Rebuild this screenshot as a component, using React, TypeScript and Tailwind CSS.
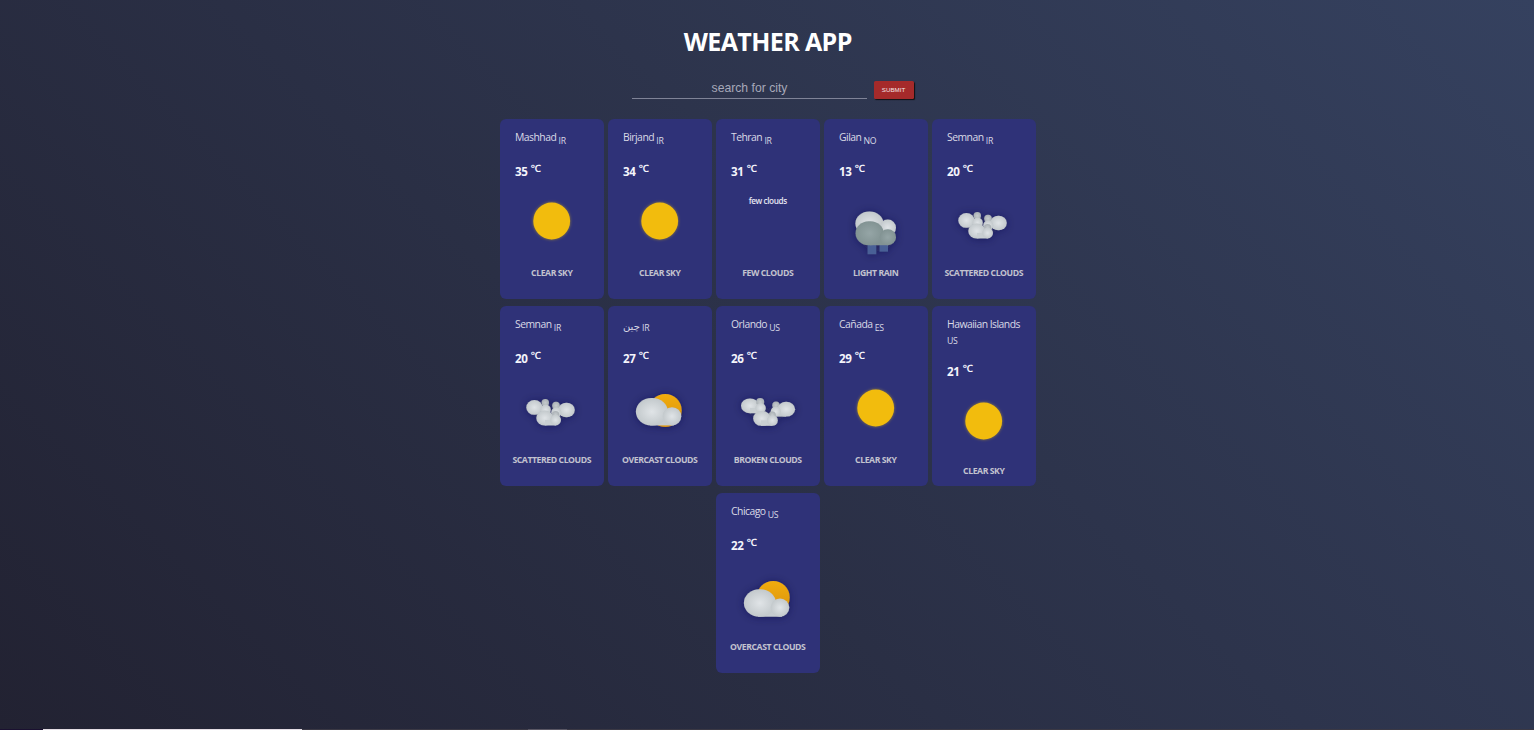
import React from 'react';

type Sky = 'clear' | 'missing' | 'rain' | 'scattered' | 'overcast' | 'broken';

interface City {
  name: string;
  country: string;
  temp: number;
  sky: Sky;
  label: string;
  rtl?: boolean;
  wrap?: boolean;
  drift?: number;
}

const cities: City[] = [
  { name: 'Mashhad', country: 'IR', temp: 35, sky: 'clear', label: 'CLEAR SKY' },
  { name: 'Birjand', country: 'IR', temp: 34, sky: 'clear', label: 'CLEAR SKY' },
  { name: 'Tehran', country: 'IR', temp: 31, sky: 'missing', label: 'FEW CLOUDS' },
  { name: 'Gilan', country: 'NO', temp: 13, sky: 'rain', label: 'LIGHT RAIN' },
  { name: 'Semnan', country: 'IR', temp: 20, sky: 'scattered', label: 'SCATTERED CLOUDS' },
  { name: 'Semnan', country: 'IR', temp: 20, sky: 'scattered', label: 'SCATTERED CLOUDS' },
  { name: 'چین', country: 'IR', temp: 27, sky: 'overcast', label: 'OVERCAST CLOUDS', rtl: true },
  { name: 'Orlando', country: 'US', temp: 26, sky: 'broken', label: 'BROKEN CLOUDS' },
  { name: 'Cañada', country: 'ES', temp: 29, sky: 'clear', label: 'CLEAR SKY' },
  { name: 'Hawaiian Islands', country: 'US', temp: 21, sky: 'clear', label: 'CLEAR SKY', wrap: true },
  { name: 'Chicago', country: 'US', temp: 22, sky: 'overcast', label: 'OVERCAST CLOUDS', drift: 4.3 },
];

/* Gradients and shadows shared by every weather drawing. */
function Defs() {
  return (
    <svg width="0" height="0" className="absolute" aria-hidden="true">
      <defs>
        <radialGradient id="puff">
          <stop offset="0" stopColor="#e0e4e7" />
          <stop offset="1" stopColor="#c3c9cc" />
        </radialGradient>
        <radialGradient id="dim">
          <stop offset="0" stopColor="#c6cbce" />
          <stop offset="1" stopColor="#a9b0b4" />
        </radialGradient>
        <radialGradient id="storm">
          <stop offset="0" stopColor="#95a5a6" />
          <stop offset="1" stopColor="#829393" />
        </radialGradient>
        <linearGradient id="amber" x1="0" y1="0" x2="0" y2="1">
          <stop offset="0" stopColor="#f1ac10" />
          <stop offset="1" stopColor="#d9920f" />
        </linearGradient>
        <filter id="shade" x="-40%" y="-40%" width="180%" height="180%">
          <feDropShadow dx="0" dy="0.5" stdDeviation="4.5" floodColor="#14163f" floodOpacity="0.5" />
        </filter>
        <filter id="glow" x="-30%" y="-30%" width="160%" height="160%">
          <feDropShadow dx="0" dy="0" stdDeviation="1.6" floodColor="#f1c40f" floodOpacity="0.55" />
        </filter>
      </defs>
    </svg>
  );
}

/* Each drawing covers an 80 by 70 area whose centre is the centre of the card. */
function Picture({ sky, drift = 0 }: { sky: Sky; drift?: number }) {
  return (
    <svg viewBox="0 0 80 70" className="h-[70px] w-[80px] overflow-visible">
      {sky === 'clear' && <circle cx="39.7" cy="35" r="18.4" fill="#f2bc11" filter="url(#glow)" />}
      {sky === 'rain' && (
        <g filter="url(#shade)">
          <ellipse cx="33.4" cy="37.5" rx="14" ry="11.9" fill="url(#puff)" />
          <circle cx="51.8" cy="41.7" r="8.2" fill="url(#puff)" />
          <rect x="31.6" y="56" width="8.6" height="12.2" fill="#4a6096" />
          <rect x="43.6" y="56" width="8.4" height="9.6" fill="#4a6096" />
          <path d="M34 50H52V59.2H34Z" fill="#829393" />
          <rect x="19.6" y="35.2" width="28" height="24" rx="13" ry="12" fill="url(#storm)" />
          <rect x="43.6" y="43.2" width="16.4" height="16" rx="8" fill="url(#storm)" />
        </g>
      )}
      {sky === 'scattered' && (
        <g filter="url(#shade)">
          <ellipse cx="22.4" cy="34.4" rx="8.1" ry="7.4" fill="url(#puff)" />
          <circle cx="33.3" cy="29.8" r="3.7" fill="url(#dim)" />
          <circle cx="44" cy="32.6" r="3.8" fill="url(#dim)" />
          <circle cx="33.6" cy="36.8" r="5.2" fill="url(#puff)" />
          <ellipse cx="54.5" cy="37" rx="8.3" ry="7.3" fill="url(#puff)" />
          <circle cx="44.3" cy="39.3" r="5" fill="url(#puff)" />
          <circle cx="43.6" cy="41.5" r="3.6" fill="url(#dim)" />
          <rect x="24.3" y="37.6" width="17" height="14.8" rx="8.2" ry="7.4" fill="url(#puff)" />
          <path d="M33 47H44V52.4H33Z" fill="#c9cfd2" />
          <circle cx="43.6" cy="47" r="5.4" fill="url(#puff)" />
        </g>
      )}
      {sky === 'broken' && (
        <g filter="url(#shade)">
          <ellipse cx="22" cy="32.8" rx="9" ry="7.4" fill="url(#puff)" />
          <circle cx="32.2" cy="29" r="4" fill="url(#dim)" />
          <path d="M22 35H33V40.2H22Z" fill="#c9cfd2" />
          <circle cx="32.6" cy="35.1" r="5.2" fill="url(#puff)" />
          <circle cx="48" cy="32.2" r="3.7" fill="url(#dim)" />
          <path d="M48 38H58V43.6H48Z" fill="#c3c9cc" />
          <ellipse cx="58.2" cy="36.2" rx="8.9" ry="7.4" fill="url(#puff)" />
          <circle cx="47.8" cy="38.5" r="5.1" fill="url(#puff)" />
          <circle cx="44.3" cy="42" r="3.5" fill="url(#dim)" />
          <rect x="25.2" y="38" width="17.4" height="14.8" rx="8.2" ry="7.4" fill="url(#puff)" />
          <path d="M33 47.4H44.4V52.8H33Z" fill="#c9cfd2" />
          <circle cx="44.4" cy="47.4" r="5.4" fill="url(#puff)" />
        </g>
      )}
      {sky === 'overcast' && (
        <g filter="url(#shade)">
          <circle cx="45.2" cy="37.4" r="16.5" fill="url(#amber)" />
          <g transform={`translate(0 ${drift})`}>
            <path d="M30 45H54V52.4H30Z" fill="#c6ccd0" />
            <rect x="15.9" y="25" width="32" height="27.4" rx="15.6" ry="13.7" fill="url(#puff)" />
            <rect x="42.7" y="34.2" width="18.6" height="18.2" rx="9.2" ry="9.1" fill="url(#puff)" />
          </g>
        </g>
      )}
    </svg>
  );
}

function Card({ city }: { city: City }) {
  return (
    <article className="flex h-[180px] w-[103.5px] flex-col overflow-hidden rounded-[6px] bg-[#2f3278]">
      <h2
        className={`flex h-[36px] shrink-0 items-baseline pt-[10px] pl-[15px] text-[10.4px] leading-[17px] tracking-[-0.52px] whitespace-nowrap text-[#dadae6] ${city.wrap ? 'mb-[13px] flex-col gap-0' : 'gap-[2.2px]'}`}
      >
        <span className={city.rtl ? "relative top-[2px] font-['DejaVu_Sans',sans-serif] text-[10px] tracking-normal" : ''}>{city.name}</span>
        <span className={`text-[8.7px] tracking-[-0.3px] ${city.wrap ? 'leading-[16px]' : 'relative top-[3px] leading-[14px]'}`}>{city.country}</span>
      </h2>
      <div className="flex h-[48px] shrink-0 items-baseline gap-[3px] pt-[8px] pl-[15px] leading-[17px] font-bold text-[#f4f4fb]">
        <span className="text-[11.6px] tracking-[-0.3px]">{city.temp}</span>
        <span className="relative top-[-4px] text-[10.4px] leading-[12px] font-semibold">℃</span>
      </div>
      {city.sky === 'missing' ? (
        <p className="-mt-[8px] h-[71px] shrink-0 text-center text-[8.2px] leading-[12px] font-semibold tracking-[-0.4px] text-[#e6e6f2]">few clouds</p>
      ) : (
        <div className="-mt-[17px] flex h-[80px] shrink-0 justify-center">
          <Picture sky={city.sky} drift={city.drift} />
        </div>
      )}
      <p
        className={`text-center text-[8.7px] leading-[14px] font-bold tracking-[-0.44px] whitespace-nowrap text-[#c3c3cf] ${city.wrap ? '-mt-[2px]' : ''}`}
      >
        {city.label}
      </p>
    </article>
  );
}

export default function App() {
  return (
    <div className="relative flex h-[730px] w-[1534px] flex-col items-center overflow-hidden bg-[linear-gradient(45deg,#222232,#35415f)] pl-[1.5px] font-['Open_Sans','Noto_Sans',sans-serif]">
      <Defs />
      <h1 className="mt-[23px] h-[36px] text-[25px] leading-[36px] font-bold tracking-[-0.6px] text-white">WEATHER APP</h1>
      <form className="mt-[18px] ml-[9.5px] flex h-[42px] w-[282px] gap-[7px]" onSubmit={(e) => e.preventDefault()}>
        <input
          className="h-[22px] w-[235px] border-b border-[#7f8397] bg-transparent pl-px text-center font-['Liberation_Sans',sans-serif] text-[12.2px] text-white outline-none placeholder:text-[#a7a9b9]"
          placeholder="search for city"
        />
        <button className="mt-[4px] h-[18px] w-[40px] rounded-[1.5px] bg-[#a52a2a] font-['Liberation_Sans',sans-serif] text-[6.2px] font-medium text-[#f4e4e6] shadow-[1px_1px_1px_#111]">
          SUBMIT
        </button>
      </form>
      <main className="flex w-[535.5px] flex-wrap justify-center gap-x-[4.5px] gap-y-[7px]">
        {cities.map((city, i) => (
          <Card key={i} city={city} />
        ))}
      </main>
      <div className="mt-auto -ml-[1.5px] flex h-px w-[1534px] shrink-0 bg-[#3a3844]">
        <span className="w-[43px] bg-[#1a1030]" />
        <span className="w-[259px] bg-[#e4dde4]" />
        <span className="w-[226px]" />
        <span className="w-[39px] bg-[#5a5764]" />
      </div>
    </div>
  );
}
